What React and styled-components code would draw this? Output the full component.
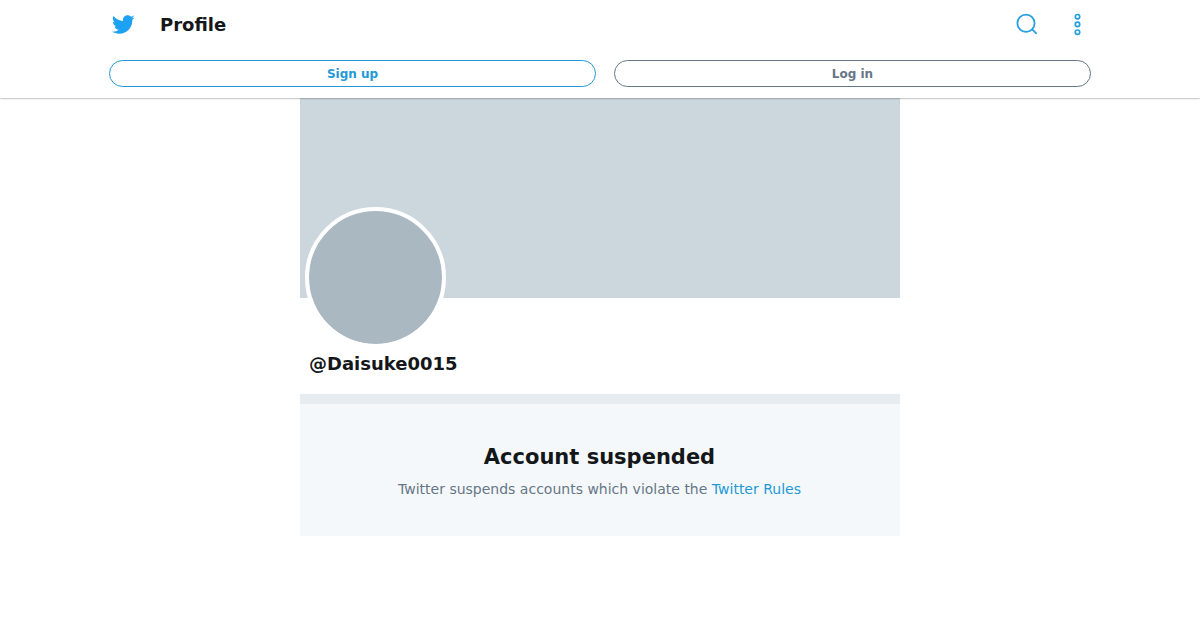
import React from 'react';
import styled, {createGlobalStyle} from 'styled-components';

const colors = {
  blue: '#1da1f2',
  icon: '#239fdf',
  link: '#2398d6',
  black: '#14171a',
  grey: '#657786',
  banner: '#ccd6dd',
  avatar: '#aab8c2',
  divider: '#e6ecf0',
  panel: '#f5f8fa',
  white: '#fff',
};

const BirdIcon = () => (
  <StyledBird viewBox='0 0 24 24'>
    <path d='M23.643 4.937c-.835.37-1.732.62-2.675.733.962-.576 1.7-1.49 2.048-2.578-.9.534-1.897.922-2.958 1.13-.85-.904-2.06-1.47-3.4-1.47-2.572 0-4.658 2.086-4.658 4.66 0 .364.042.718.12 1.06-3.873-.195-7.304-2.05-9.602-4.868-.4.69-.63 1.49-.63 2.342 0 1.616.823 3.043 2.072 3.878-.764-.025-1.482-.234-2.11-.583v.06c0 2.257 1.605 4.14 3.737 4.568-.392.106-.803.162-1.227.162-.3 0-.593-.028-.877-.082.593 1.85 2.313 3.198 4.352 3.234-1.595 1.25-3.604 1.995-5.786 1.995-.376 0-.747-.022-1.112-.065 2.062 1.323 4.51 2.093 7.14 2.093 8.57 0 13.255-7.098 13.255-13.254 0-.2-.005-.402-.014-.602.91-.658 1.7-1.477 2.323-2.41z'/>
  </StyledBird>
);

const SearchIcon = () => (
  <StyledLineIcon viewBox='0 0 24 24'>
    <circle cx='11' cy='11.3' r='8.6'/>
    <path d='M17.2 17.4l4 4'/>
  </StyledLineIcon>
);

const MoreIcon = () => (
  <StyledLineIcon viewBox='0 0 24 24'>
    <circle cx='12.5' cy='4.7' r='2.2'/>
    <circle cx='12.5' cy='12.4' r='2.2'/>
    <circle cx='12.5' cy='20.2' r='2.2'/>
  </StyledLineIcon>
);

const Header = () => (
  <StyledHeader>
    <StyledBar>
      <BirdIcon/>
      <StyledPageTitle>Profile</StyledPageTitle>
      <StyledActions>
        <SearchIcon/>
        <MoreIcon/>
      </StyledActions>
    </StyledBar>
    <StyledButtons>
      <StyledButton $color={colors.link} $grow={487}>Sign up</StyledButton>
      <StyledButton $color={colors.grey} $grow={477}>Log in</StyledButton>
    </StyledButtons>
  </StyledHeader>
);

const App = () => (
  <>
    <GlobalStyle/>
    <Header/>
    <StyledProfile>
      <StyledBanner/>
      <StyledUser>
        <StyledAvatar/>
        <StyledName>@Daisuke0015</StyledName>
      </StyledUser>
      <StyledNotice>
        <StyledNoticeTitle>Account suspended</StyledNoticeTitle>
        <StyledNoticeText>
          Twitter suspends accounts which violate the <StyledLink href='#'>Twitter Rules</StyledLink>
        </StyledNoticeText>
      </StyledNotice>
    </StyledProfile>
  </>
);

export default App;

const GlobalStyle = createGlobalStyle`
  * {
    box-sizing: border-box;
  }

  body {
    margin: 0;
    background: ${colors.white};
    color: ${colors.black};
    font-family: "DejaVu Sans", sans-serif;
    font-size: 14px;
  }
`;

const StyledHeader = styled.header`
  position: relative;
  z-index: 1;
  height: 98px;
  padding: 0 109px;
  background: ${colors.white};
  box-shadow: 0 0 2px rgba(0, 0, 0, .6);
`;

const StyledBar = styled.div`
  display: flex;
  align-items: center;
  height: 48px;
  padding: 0 2px;
`;

const StyledBird = styled.svg`
  width: 24px;
  height: 25px;
  margin-top: 1px;
  fill: ${colors.blue};
`;

const StyledPageTitle = styled.h1`
  margin: 1px 0 0 25px;
  font-size: 18px;
  line-height: 24px;
`;

const StyledActions = styled.div`
  display: flex;
  gap: 26px;
  margin-left: auto;
`;

const StyledLineIcon = styled.svg`
  width: 24px;
  height: 24px;
  fill: none;
  stroke: ${colors.icon};
  stroke-width: 1.7;
  stroke-linecap: round;
`;

const StyledButtons = styled.div`
  display: flex;
  gap: 18px;
  padding-top: 12px;
`;

const StyledButton = styled.button`
  flex: ${({$grow}) => $grow} 1 0;
  height: 27px;
  padding: 1px 0 0;
  border: 1px solid ${({$color}) => $color};
  border-radius: 14px;
  background: transparent;
  color: ${({$color}) => $color};
  font-family: inherit;
  font-size: 12px;
  font-weight: bold;
  line-height: 24px;
`;

const StyledProfile = styled.main`
  width: 600px;
  margin: 0 auto;
`;

const StyledBanner = styled.div`
  height: 200px;
  background: ${colors.banner};
`;

const StyledUser = styled.section`
  display: flow-root;
  height: 96px;
  padding: 0 5px;
`;

const StyledAvatar = styled.div`
  width: 141px;
  height: 141px;
  margin-top: -91px;
  border: 4px solid ${colors.white};
  border-radius: 50%;
  background: ${colors.avatar};
  background-clip: padding-box;
`;

const StyledName = styled.h2`
  margin: 4px 4px 0;
  font-size: 18px;
  line-height: 24px;
`;

const StyledNotice = styled.section`
  height: 142px;
  padding: 39px 1px 0 0;
  border-top: 10px solid ${colors.divider};
  background: ${colors.panel};
  text-align: center;
`;

const StyledNoticeTitle = styled.h3`
  margin: 0;
  font-size: 21px;
  line-height: 28px;
`;

const StyledNoticeText = styled.p`
  margin: 8px 0 0;
  color: ${colors.grey};
  line-height: 20px;
`;

const StyledLink = styled.a`
  color: ${colors.link};
  text-decoration: none;
`;
